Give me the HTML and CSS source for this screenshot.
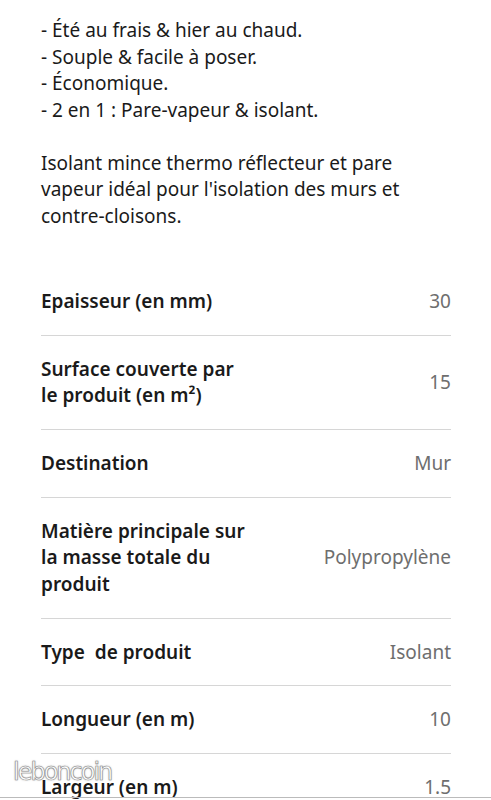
FILE: index.html
```html
<!DOCTYPE html>
<html lang="fr">
<head>
    <meta charset="UTF-8">
    <meta name="viewport" content="width=device-width, initial-scale=1.0">
    <title>Isolant mince thermo réflecteur</title>
    <link rel="stylesheet" href="styles.css">
</head>
<body>
    <div class="page">
        <p class="description">
            - Été au frais &amp; hier au chaud.<br>
            - Souple &amp; facile à poser.<br>
            - Économique.<br>
            - 2 en 1 : Pare-vapeur &amp; isolant.<br>
            <br>
            Isolant mince thermo réflecteur et pare vapeur idéal pour l'isolation des murs et contre&#8209;cloisons.
        </p>

        <div class="specs">
            <div class="spec">
                <div class="label">Epaisseur (en mm)</div>
                <div class="value">30</div>
            </div>
            <div class="spec">
                <div class="label">Surface couverte par le produit (en m²)</div>
                <div class="value">15</div>
            </div>
            <div class="spec">
                <div class="label">Destination</div>
                <div class="value">Mur</div>
            </div>
            <div class="spec">
                <div class="label">Matière principale sur la masse totale du produit</div>
                <div class="value">Polypropylène</div>
            </div>
            <div class="spec">
                <div class="label">Type &nbsp;de produit</div>
                <div class="value">Isolant</div>
            </div>
            <div class="spec">
                <div class="label">Longueur (en m)</div>
                <div class="value">10</div>
            </div>
            <div class="spec">
                <div class="label">Largeur (en m)</div>
                <div class="value">1.5</div>
            </div>
        </div>
    </div>
    <div class="watermark">leboncoin</div>
    <div class="bottom-line"></div>
</body>
</html>
```

FILE: styles.css
```css
html, body {
    height: 100%;
    overflow: hidden;
}
body {
    margin: 0;
    background-color: #fff;
    color: #1a1a1a;
    font-family: "Noto Sans", "Open Sans", sans-serif;
    font-size: 19px;
    position: relative;
}
.page {
    padding: 17px 40px 0 41px;
}
.description {
    margin: 0;
    line-height: 26.5px;
}
.specs {
    margin-top: 39px;
}
.spec {
    display: flex;
    justify-content: space-between;
    align-items: center;
    padding: 20px 0;
    border-bottom: 1px solid #d6d6d6;
    line-height: 26.67px;
}
.label {
    font-weight: 600;
    max-width: 212px;
}
.value {
    color: #6e6e6e;
    text-align: right;
}
.watermark {
    position: absolute;
    left: 13px;
    top: 758px;
    font-family: "DejaVu Sans", sans-serif;
    font-size: 24px;
    letter-spacing: -2px;
    color: #fff;
    -webkit-text-stroke: 0.6px #8a8a8a;
    text-shadow: 0 0 2px #aaa;
}
.bottom-line {
    position: absolute;
    left: 0;
    right: 0;
    top: 797px;
    height: 1px;
    background-color: #bbb;
}
```
